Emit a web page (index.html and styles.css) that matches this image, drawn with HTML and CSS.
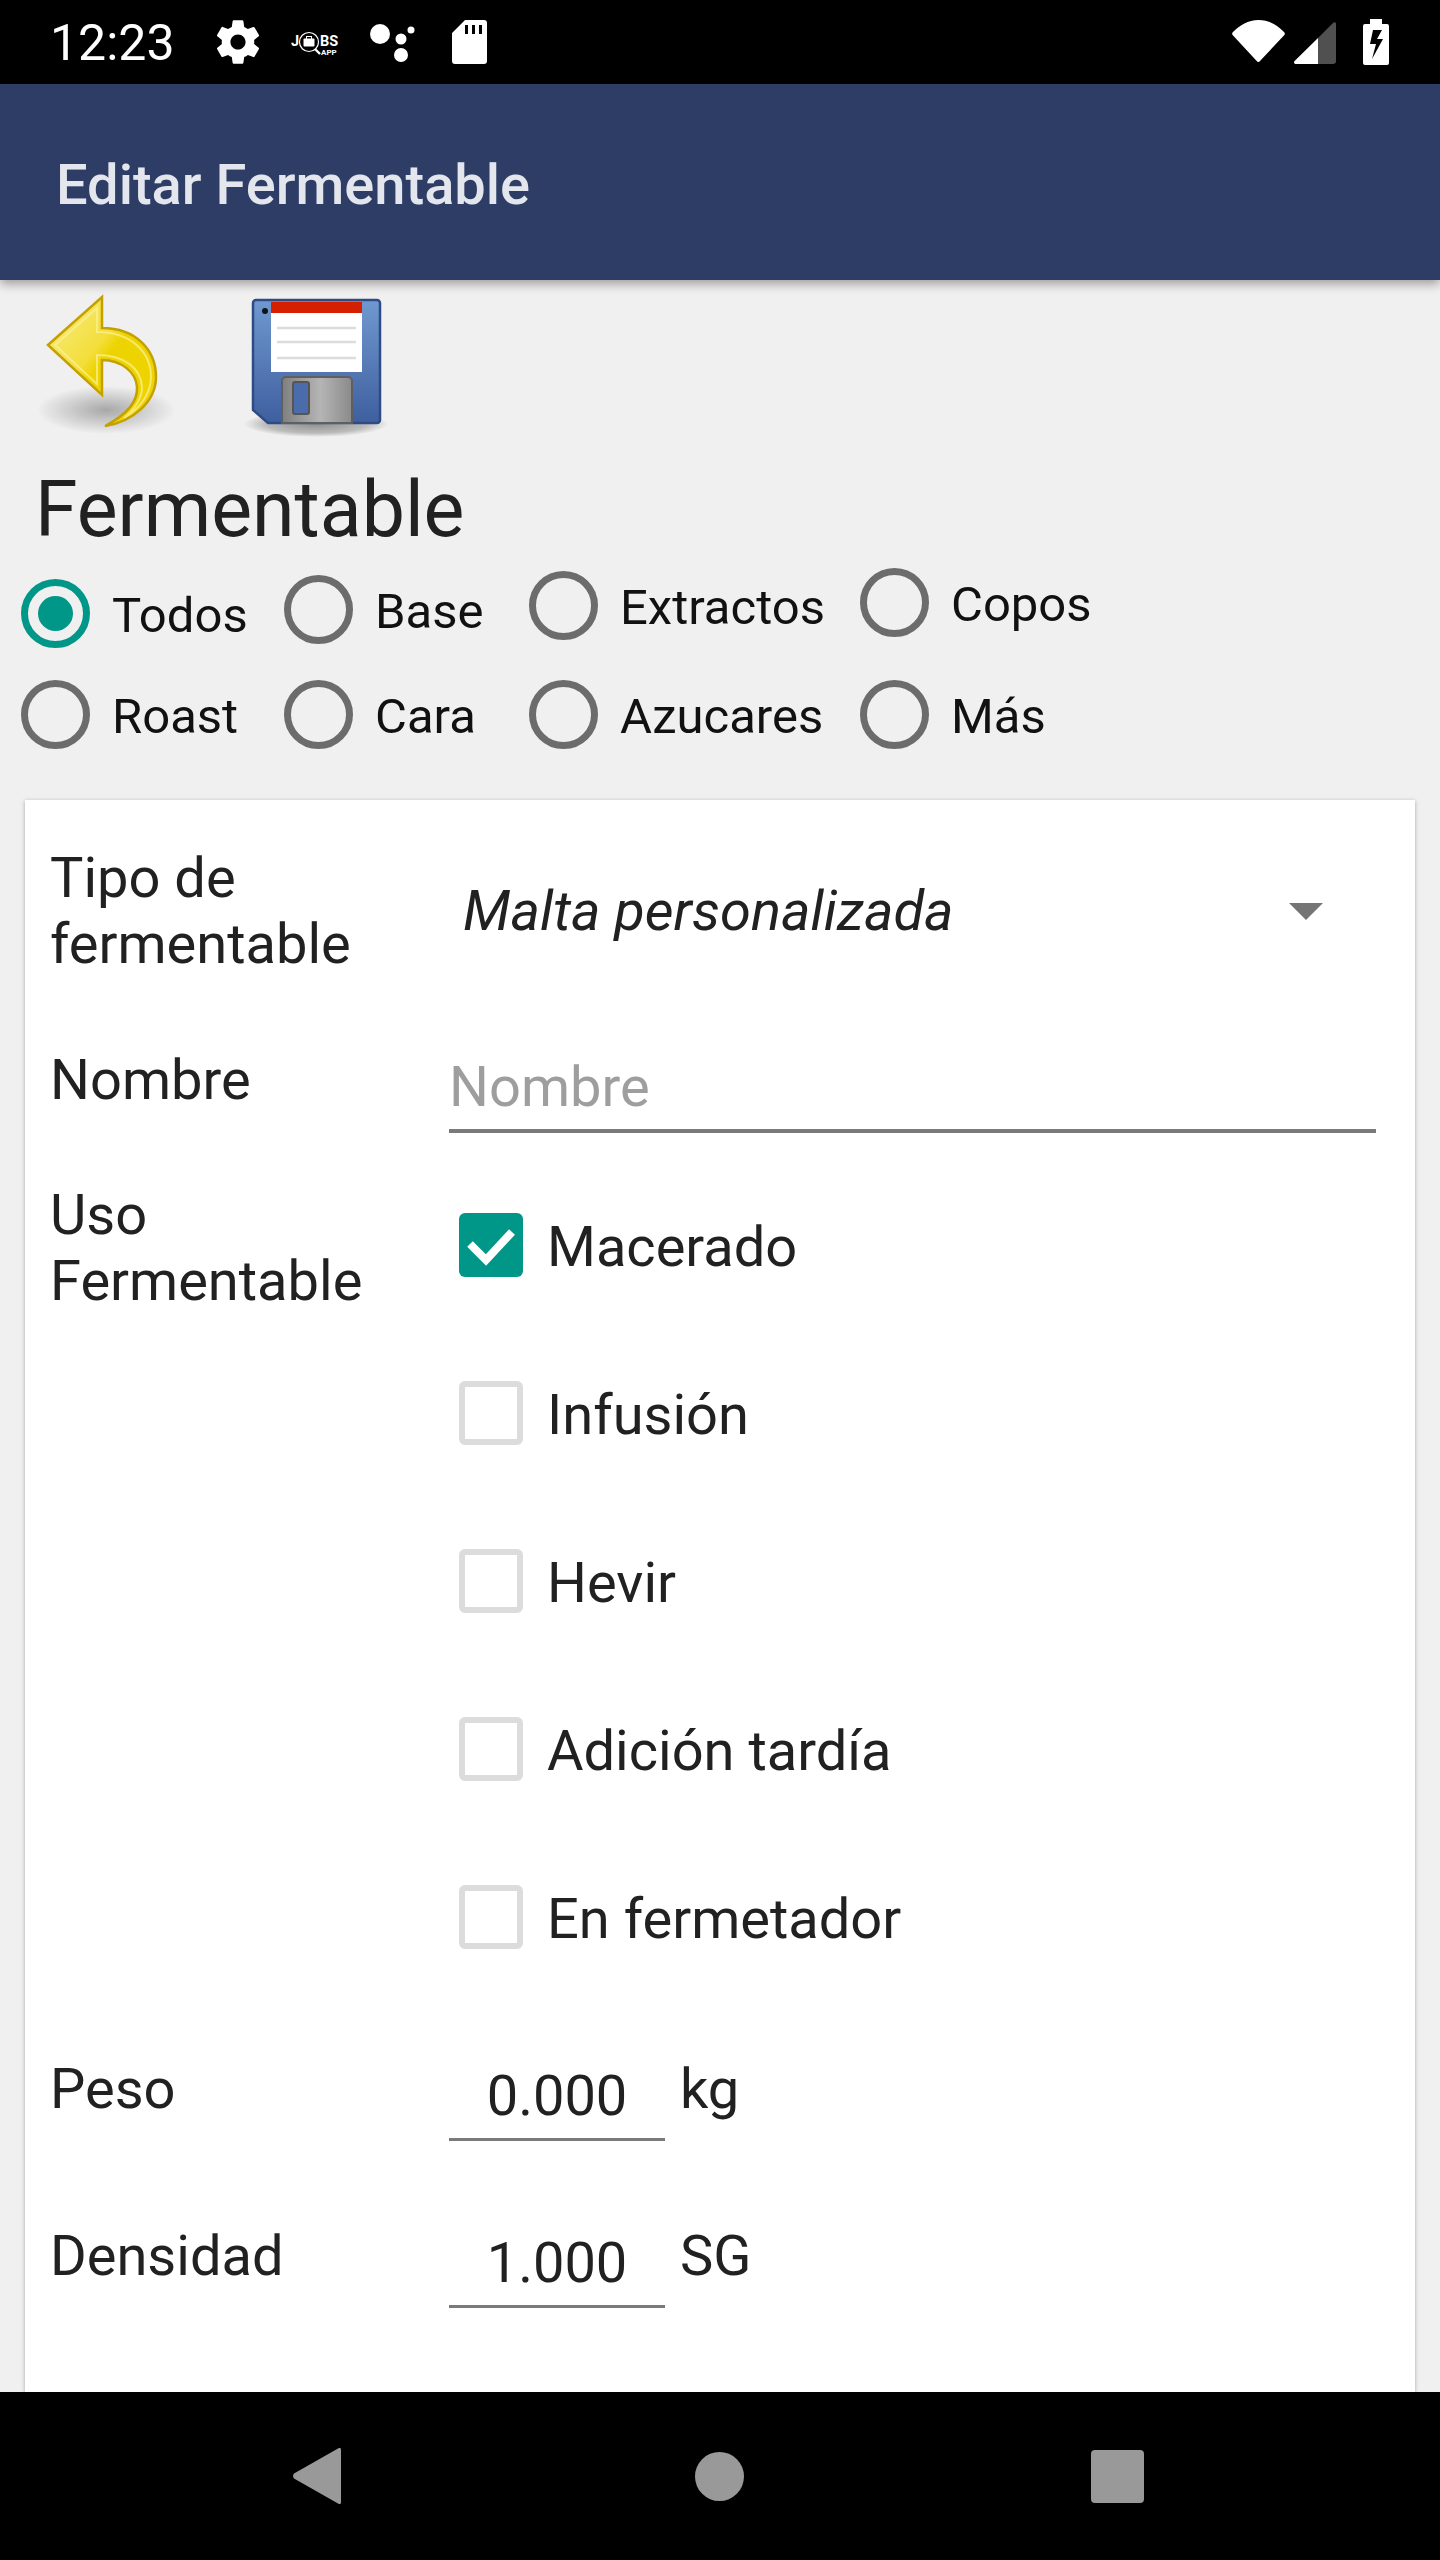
FILE: index.html
```html
<!DOCTYPE html>
<html lang="es">
<head>
<meta charset="utf-8">
<title>Editar Fermentable</title>
<link rel="stylesheet" href="styles.css">
</head>
<body>
<div class="screen">
  <header class="statusbar">
    <span class="clock">12:23</span>
    <svg class="st-gear" viewBox="0 0 24 24"><path fill="#fff" d="M19.43 12.98c.04-.32.07-.64.07-.98s-.03-.66-.07-.98l2.11-1.65c.19-.15.24-.42.12-.64l-2-3.46c-.12-.22-.39-.3-.61-.22l-2.49 1c-.52-.4-1.08-.73-1.69-.98l-.38-2.65C14.46 2.18 14.25 2 14 2h-4c-.25 0-.46.18-.49.42l-.38 2.65c-.61.25-1.17.59-1.69.98l-2.49-1c-.23-.09-.49 0-.61.22l-2 3.46c-.13.22-.07.49.12.64l2.11 1.65c-.04.32-.07.65-.07.98s.03.66.07.98l-2.11 1.65c-.19.15-.24.42-.12.64l2 3.46c.12.22.39.3.61.22l2.49-1c.52.4 1.08.73 1.69.98l.38 2.65c.03.24.24.42.49.42h4c.25 0 .46-.18.49-.42l.38-2.65c.61-.25 1.17-.59 1.69-.98l2.49 1c.23.09.49 0 .61-.22l2-3.46c.12-.22.07-.49-.12-.64l-2.11-1.65zM12 15.5c-1.93 0-3.5-1.57-3.5-3.5s1.57-3.5 3.5-3.5 3.5 1.57 3.5 3.5-1.57 3.5-3.5 3.5z"/></svg>
    <svg class="st-jobs" viewBox="0 0 50 30">
      <text x="0" y="17" class="jobs-big">J</text>
      <circle cx="18" cy="13" r="9.5" fill="none" stroke="#fff" stroke-width="1.2"/>
      <rect x="12.5" y="9.5" width="11" height="8" rx="1" fill="#fff"/>
      <rect x="15.5" y="7.5" width="5" height="3" fill="none" stroke="#fff"/>
      <path d="M24 20l5 5" stroke="#fff" stroke-width="2.4"/>
      <text x="29" y="17" class="jobs-big">BS</text>
      <text x="30" y="26" class="jobs-small">APP</text>
    </svg>
    <svg class="st-dots" viewBox="0 0 56 44">
      <circle cx="12" cy="14" r="10" fill="#fff"/>
      <circle cx="43" cy="10" r="3.5" fill="#fff"/>
      <circle cx="33" cy="19" r="5.5" fill="#fff"/>
      <circle cx="33" cy="35" r="7" fill="#fff"/>
    </svg>
    <svg class="st-sd" viewBox="0 0 35 44"><path fill="#fff" fill-rule="evenodd" d="M13 0H32a3 3 0 0 1 3 3V41a3 3 0 0 1-3 3H3a3 3 0 0 1-3-3V13ZM13 5V14H16V5ZM20 5V14H23V5ZM27 5V14H30V5Z"/></svg>
    <span class="st-spacer"></span>
    <svg class="st-wifi" viewBox="0 0 53 42"><path fill="#fff" d="M1 12C8 5 16 0 26.500 0S45 5 52 12c1 1 1 2 .4 3L28 41c-1 1.300-2.300 1.300-3.300 0L.6 15c-.7-1-.6-2 .4-3Z"/></svg>
    <svg class="st-signal" viewBox="0 0 42 42"><path fill="#505050" d="M24 16 39 1c1.500-1.400 3-.6 3 1V39a3 3 0 0 1-3 3H24Z"/><path fill="#fff" d="M24 16V42H2C0 42-.6 40 .6 39Z"/></svg>
    <svg class="st-batt" viewBox="0 0 26 46"><path fill="#fff" fill-rule="evenodd" d="M7 0H19V5H24a2 2 0 0 1 2 2V44a2 2 0 0 1-2 2H2a2 2 0 0 1-2-2V7a2 2 0 0 1 2-2H7ZM10 11 7 25H13L9 40 20 20H14L19 11Z"/></svg>
  </header>

  <div class="appbar"><h1 class="appbar-title">Editar Fermentable</h1></div>

  <main class="content">
    <div class="toolbar">
      <svg class="tool tool-back" viewBox="0 0 140 150">
        <defs>
          <radialGradient id="sh"><stop offset="0" stop-color="#000" stop-opacity=".3"/><stop offset="1" stop-color="#000" stop-opacity="0"/></radialGradient>
          <linearGradient id="arrowFill" x1="0" y1="0" x2="1" y2="1"><stop offset="0" stop-color="#f8ee8a"/><stop offset=".42" stop-color="#f3de3a"/><stop offset=".5" stop-color="#edd400"/><stop offset="1" stop-color="#edd400"/></linearGradient>
        </defs>
        <ellipse cx="70" cy="120" rx="69" ry="24" fill="url(#sh)"/>
        <path d="M12 55 66 7V38C100 38 120 60 120 87 120 112 96 132 69 136 90 125 102 112 101 97 100 82 85 70 66 70V105Z" fill="url(#arrowFill)" stroke="#c4a000" stroke-width="2.500" stroke-linejoin="miter"/>
        <path d="M19 55 61 18V42C95 42 115 62 115 87 115 105 102 120 88 128 100 118 106 108 106 97 105 78 88 65 61 65V94Z" fill="none" stroke="#fbf19a" stroke-opacity=".7" stroke-width="2"/>
      </svg>
      <svg class="tool tool-save" viewBox="0 0 150 150">
        <defs>
          <linearGradient id="disk" x1="0" y1="0" x2="0" y2="1"><stop offset="0" stop-color="#7099d0"/><stop offset="1" stop-color="#3f5f9f"/></linearGradient>
          <linearGradient id="shut" x1="0" y1="0" x2="1" y2="0"><stop offset="0" stop-color="#7f7f7f"/><stop offset=".55" stop-color="#b5b5b5"/><stop offset="1" stop-color="#8a8a8a"/></linearGradient>
          <radialGradient id="sh2"><stop offset="0" stop-color="#000" stop-opacity=".4"/><stop offset=".7" stop-color="#000" stop-opacity=".22"/><stop offset="1" stop-color="#000" stop-opacity="0"/></radialGradient>
        </defs>
        <ellipse cx="76" cy="134" rx="72" ry="13" fill="url(#sh2)"/>
        <path d="M16 10H137a3 3 0 0 1 3 3V130a3 3 0 0 1-3 3H28L13 120V13a3 3 0 0 1 3-3Z" fill="url(#disk)" stroke="#2f4b85" stroke-width="2.500"/>
        <rect x="31" y="12" width="91" height="70" fill="#fff"/>
        <rect x="31" y="12" width="91" height="11" fill="#d41f00"/>
        <path d="M37 38H116M37 52H116M37 68H116" stroke="#dcdcdc" stroke-width="2.500"/>
        <circle cx="25" cy="21" r="3" fill="#10131c"/>
        <path d="M46 87H108a4 4 0 0 1 4 4V133H42V91a4 4 0 0 1 4-4Z" fill="url(#shut)" stroke="#5f5f5f" stroke-width="2"/>
        <rect x="53" y="92" width="16" height="32" rx="2" fill="#4a6cab" stroke="#555" stroke-width="2"/>
      </svg>
    </div>

    <h2 class="section-title">Fermentable</h2>

    <div class="radio-grid">
      <label class="radio-item shift-11"><span class="radio radio-on"></span><span>Todos</span></label>
      <label class="radio-item shift-7"><span class="radio"></span><span>Base</span></label>
      <label class="radio-item shift-3"><span class="radio"></span><span>Extractos</span></label>
      <label class="radio-item"><span class="radio"></span><span>Copos</span></label>
      <label class="radio-item"><span class="radio"></span><span>Roast</span></label>
      <label class="radio-item"><span class="radio"></span><span>Cara</span></label>
      <label class="radio-item"><span class="radio"></span><span>Azucares</span></label>
      <label class="radio-item"><span class="radio"></span><span>Más</span></label>
    </div>

    <section class="card">
      <div class="row row-type">
        <div class="label">Tipo de fermentable</div>
        <div class="spinner"><span class="spinner-text">Malta personalizada</span><span class="spinner-arrow"></span></div>
      </div>
      <div class="row row-name">
        <div class="label">Nombre</div>
        <div class="input input-wide placeholder">Nombre</div>
      </div>
      <div class="row row-use">
        <div class="label">Uso Fermentable</div>
        <div class="checks">
          <div class="check-item"><span class="check check-on"><svg viewBox="0 0 64 64"><path d="M11 31 27 47 53 19" fill="none" stroke="#fff" stroke-width="8"/></svg></span><span class="check-text">Macerado</span></div>
          <div class="check-item"><span class="check"></span><span class="check-text">Infusión</span></div>
          <div class="check-item"><span class="check"></span><span class="check-text">Hevir</span></div>
          <div class="check-item"><span class="check"></span><span class="check-text">Adición tardía</span></div>
          <div class="check-item"><span class="check"></span><span class="check-text">En fermetador</span></div>
        </div>
      </div>
      <div class="row row-num row-weight">
        <div class="label">Peso</div>
        <div class="num-field"><div class="input input-num">0.000</div><span class="unit">kg</span></div>
      </div>
      <div class="row row-num row-density">
        <div class="label">Densidad</div>
        <div class="num-field"><div class="input input-num">1.000</div><span class="unit">SG</span></div>
      </div>
    </section>
  </main>

  <nav class="navbar">
    <svg class="nav-back" viewBox="0 0 48 56"><path fill="#999" d="M45 .6c1.500-1.400 3-.6 3 1V54.400c0 1.600-1.500 2.400-3 1L1 30.500c-1.300-1.400-1.300-3.600 0-5Z"/></svg>
    <span class="nav-home"></span>
    <span class="nav-recent"></span>
  </nav>
</div>
</body>
</html>
```

FILE: styles.css
```css
* { box-sizing: border-box; }
html, body { margin: 0; padding: 0; }
body { font-family: Roboto, "Liberation Sans", sans-serif; color: #212121; background: #f0f0f0; }
.screen { width: 1440px; height: 2560px; display: flex; flex-direction: column; overflow: hidden; }

.statusbar { height: 84px; flex: none; background: #000; display: flex; align-items: flex-start; position: relative; }
.statusbar svg { display: block; flex: none; }
.clock { color: #fff; font-size: 50px; line-height: 86px; margin-left: 50px; width: 166px; flex: none; }
.st-gear { width: 52px; height: 52px; margin-top: 16px; margin-left: -4px; }
.st-jobs { width: 50px; height: 30px; margin-top: 29px; margin-left: 27px; }
.jobs-big { font: 700 14.500px Roboto, sans-serif; fill: #fff; }
.jobs-small { font: 700 8px Roboto, sans-serif; fill: #fff; }
.st-dots { width: 56px; height: 44px; margin-top: 20px; margin-left: 27px; }
.st-sd { width: 35px; height: 44px; margin-top: 20px; margin-left: 28px; }
.st-spacer { flex: 1; }
.st-wifi { width: 53px; height: 42px; margin-top: 20px; }
.st-signal { width: 42px; height: 42px; margin-top: 22px; margin-left: 9px; }
.st-batt { width: 26px; height: 46px; margin-top: 19px; margin-left: 27px; margin-right: 51px; }

.appbar { height: 196px; flex: none; background: #2e3d66; display: flex; align-items: center; padding: 5px 0 0 56px; box-shadow: 0 4px 10px rgba(0,0,0,.35); position: relative; z-index: 1; }
.appbar-title { margin: 0; font-size: 56px; font-weight: 500; color: #e4e6ed; line-height: 1; }

.content { flex: 1; min-height: 0; overflow: hidden; display: flex; flex-direction: column; }
.toolbar { height: 150px; margin-top: 10px; flex: none; display: flex; padding-left: 36px; }
.tool { display: block; flex: none; height: 150px; filter: blur(.7px); }
.tool-back { width: 140px; }
.tool-save { width: 150px; margin-left: 64px; }

.section-title { margin: 25px 0 0 35px; font-size: 77px; line-height: 90px; font-weight: 400; flex: none; }

.radio-grid { margin: 13px 0 0 21px; display: grid; grid-template-columns: 263px 245px 331px auto; grid-template-rows: 112px 70px; justify-content: start; flex: none; }
.radio-item { display: flex; align-items: flex-start; font-size: 49px; line-height: 74px; color: #111; }
.shift-11 { padding-top: 11px; }
.shift-7 { padding-top: 7px; }
.shift-3 { padding-top: 3px; }
.radio { width: 69px; height: 69px; border: 7px solid #6c6c6c; border-radius: 50%; margin-right: 22px; flex: none; display: flex; align-items: center; justify-content: center; }
.radio-on { border-color: #009688; }
.radio-on::after { content: ""; width: 35px; height: 35px; border-radius: 50%; background: #009688; }

.card { margin: 50px 25px 0 25px; flex: 1; background: #fff; padding: 46px 39px 0 25px; box-shadow: 0 1px 4px rgba(0,0,0,.3); }
.row { display: grid; grid-template-columns: 399px 1fr; font-size: 56px; line-height: 65.500px; }
.label { max-width: 340px; padding-top: 3px; }
.row-type .label { padding-top: 0; }
.row-type { height: 131px; }
.spinner { display: flex; align-items: center; padding-left: 14px; padding-right: 53px; justify-content: space-between; }
.spinner-text { font-style: italic; }
.spinner-arrow { width: 0; height: 0; border-left: 17px solid transparent; border-right: 17px solid transparent; border-top: 17px solid #757575; }
.row-name { margin-top: 68px; }
.input { line-height: 84px; border-bottom: 4px solid #7a7a7a; height: 88px; }
.placeholder { color: #9e9e9e; }
.row-use { margin-top: 47px; }
.checks { display: flex; flex-direction: column; gap: 104px; padding-top: 33px; }
.check-item { display: flex; align-items: center; height: 64px; padding-left: 10px; }
.check { width: 64px; height: 64px; border: 6px solid #dcdcdc; border-radius: 6px; margin-right: 24px; flex: none; }
.check-text { padding-top: 6px; }
.check-on { background: #009688; border: 0; }
.check-on svg { display: block; width: 64px; height: 64px; }
.row-weight { margin-top: 105px; }
.row-density { margin-top: 80px; }
.num-field { display: flex; }
.input-num { width: 216px; text-align: center; border-bottom-width: 3px; height: 87px; }
.unit { margin-left: 15px; padding-top: 3px; }

.navbar { height: 168px; flex: none; background: #000; display: flex; align-items: center; position: relative; z-index: 1; }
.nav-back { width: 48px; height: 56px; margin-left: 293px; flex: none; display: block; }
.nav-home { width: 49px; height: 49px; border-radius: 50%; background: #999; margin-left: 354px; flex: none; }
.nav-recent { width: 53px; height: 53px; border-radius: 4px; background: #999; margin-left: 347px; flex: none; }
```
